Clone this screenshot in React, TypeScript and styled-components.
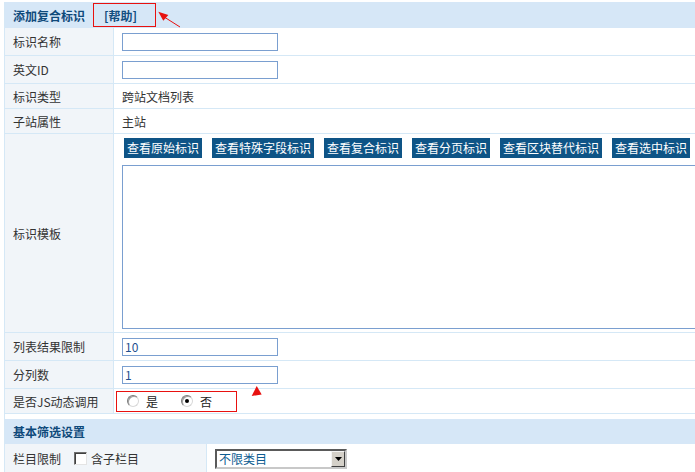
import React from 'react';
import styled, { createGlobalStyle } from 'styled-components';

const Global = createGlobalStyle`
  html, body { margin: 0; padding: 0; background: #fff; overflow: hidden; }
  body {
    font-family: "Noto Sans CJK SC", "Noto Sans", "Liberation Sans", sans-serif;
    font-size: 12px;
    color: #333;
  }
  * { box-sizing: border-box; }
`;

const Page = styled.div`
  position: relative;
  width: 695px;
  height: 472px;
  overflow: hidden;
  padding: 2px 0 0 4px;
`;

const Panel = styled.div`
  width: 700px;
  border-left: 1px solid #d5e8f6;
`;

const Header = styled.div<{ $h: number; $mt?: number }>`
  height: ${(p) => p.$h}px;
  margin-top: ${(p) => p.$mt ?? 0}px;
  background: #d6e7f7;
  display: flex;
  align-items: center;
  padding-left: 8px;
  font-weight: 700;
  color: #0f4a7b;
  white-space: nowrap;
`;

const HelpBox = styled.span`
  margin-left: 8px;
  width: 63px;
  height: 24px;
  border: 1px solid #e8110f;
  display: inline-flex;
  align-items: center;
  padding-left: 10px;
`;

const HelpLink = styled.a`
  color: #134f80;
  font-weight: 700;
  text-decoration: none;
`;

const Row = styled.div<{ $h: number; $label?: number }>`
  display: grid;
  grid-template-columns: ${(p) => p.$label ?? 109}px minmax(0, 1fr);
  height: ${(p) => p.$h}px;
  border-bottom: 1px solid #d5e8f6;
`;

const Label = styled.div`
  background: #f1f5f9;
  border-right: 1px solid #d5e8f6;
  padding-left: 8px;
  display: flex;
  align-items: center;
  color: #333;
  white-space: nowrap;
`;

const Value = styled.div<{ $pad?: number }>`
  padding-left: ${(p) => p.$pad ?? 8}px;
  display: flex;
  align-items: center;
  white-space: nowrap;
`;

const TemplateValue = styled.div`
  padding: 4px 0 0 8px;
  display: flex;
  flex-direction: column;
  align-items: flex-start;
  gap: 7px;
`;

const ButtonBar = styled.div`
  display: flex;
  gap: 10px;
  margin-left: 2px;
  white-space: nowrap;
`;

const Btn = styled.button`
  height: 20px;
  padding: 0 3px;
  margin: 0;
  background: #0e5486;
  color: #fff;
  border: 0;
  font: inherit;
  font-size: 12px;
  line-height: 20px;
  cursor: pointer;
`;

const TextArea = styled.textarea`
  width: 620px;
  height: 164px;
  flex: none;
  margin: 0;
  border: 1px solid #7a9fd0;
  resize: none;
  outline: none;
  font: inherit;
`;

const TextInput = styled.input`
  width: 156px;
  height: 18px;
  margin: 0;
  border: 1px solid #7a9fd0;
  padding: 0 2px;
  font: inherit;
  color: #1f4f8f;
  outline: none;
  background: #fff;
`;

const RadioBox = styled.div`
  width: 121px;
  height: 21px;
  border: 1px solid #e8110f;
  display: flex;
  align-items: center;
  padding-left: 10px;
`;

const RadioItem = styled.label<{ $gap?: number }>`
  display: inline-flex;
  align-items: center;
  gap: 7px;
  margin-left: ${(p) => p.$gap ?? 0}px;
  color: #222;
`;

const Radio = styled.span<{ $checked?: boolean }>`
  position: relative;
  width: 12px;
  height: 12px;
  border-radius: 50%;
  border: 1px solid;
  border-color: #7a7a7a #d8d8d8 #d8d8d8 #7a7a7a;
  box-shadow: inset 1px 1px 0 #a0a0a0;
  background: #fff;
  &::after {
    content: '';
    display: ${(p) => (p.$checked ? 'block' : 'none')};
    position: absolute;
    left: 3px;
    top: 3px;
    width: 4px;
    height: 4px;
    border-radius: 50%;
    background: #000;
  }
`;

const Check = styled.span`
  width: 13px;
  height: 13px;
  margin: 0 4px 0 13px;
  border: 1px solid;
  border-color: #6e6e6e #e4e4e4 #e4e4e4 #6e6e6e;
  box-shadow: inset 1px 1px 0 #404040;
  background: #fff;
`;

const SelectBox = styled.div`
  width: 132px;
  height: 20px;
  display: flex;
  align-items: stretch;
  border: 2px solid;
  border-color: #5a5a5a #c8c8c8 #c8c8c8 #5a5a5a;
  background: #fff;
`;

const SelectText = styled.span`
  flex: 1;
  padding-left: 2px;
  line-height: 16px;
  color: #0d5c91;
`;

const SelectArrow = styled.span`
  width: 14px;
  display: flex;
  align-items: center;
  justify-content: center;
  background: #d4d0c8;
  border: 1px solid;
  border-color: #f4f4f4 #404040 #404040 #f4f4f4;
`;

const Overlay = styled.svg<{ $x: number; $y: number }>`
  position: absolute;
  left: ${(p) => p.$x}px;
  top: ${(p) => p.$y}px;
  pointer-events: none;
  overflow: visible;
`;

const buttons = ['查看原始标识', '查看特殊字段标识', '查看复合标识', '查看分页标识', '查看区块替代标识', '查看选中标识'];

export default function App() {
  return (
    <>
      <Global />
      <Page>
        <Panel>
          <Header $h={26}>
            添加复合标识
            <HelpBox>
              <HelpLink href="#">[帮助]</HelpLink>
            </HelpBox>
          </Header>
          <Row $h={28}>
            <Label>标识名称</Label>
            <Value><TextInput /></Value>
          </Row>
          <Row $h={28}>
            <Label>英文ID</Label>
            <Value><TextInput /></Value>
          </Row>
          <Row $h={25}>
            <Label>标识类型</Label>
            <Value>跨站文档列表</Value>
          </Row>
          <Row $h={25}>
            <Label>子站属性</Label>
            <Value>主站</Value>
          </Row>
          <Row $h={199}>
            <Label>标识模板</Label>
            <TemplateValue>
              <ButtonBar>
                {buttons.map((b) => (
                  <Btn key={b} type="button">{b}</Btn>
                ))}
              </ButtonBar>
              <TextArea />
            </TemplateValue>
          </Row>
          <Row $h={28}>
            <Label>列表结果限制</Label>
            <Value><TextInput defaultValue="10" /></Value>
          </Row>
          <Row $h={28}>
            <Label>分列数</Label>
            <Value><TextInput defaultValue="1" /></Value>
          </Row>
          <Row $h={25}>
            <Label>是否JS动态调用</Label>
            <Value $pad={2}>
              <RadioBox>
                <RadioItem><Radio />是</RadioItem>
                <RadioItem $gap={23}><Radio $checked />否</RadioItem>
              </RadioBox>
            </Value>
          </Row>
          <Header $h={25} $mt={5}>基本筛选设置</Header>
          <Row $h={30} $label={202}>
            <Label>
              栏目限制<Check />含子栏目
            </Label>
            <Value>
              <SelectBox>
                <SelectText>不限类目</SelectText>
                <SelectArrow>
                  <svg width="7" height="4" viewBox="0 0 7 4"><path d="M0 0H7L3.5 4Z" fill="#000" /></svg>
                </SelectArrow>
              </SelectBox>
            </Value>
          </Row>
        </Panel>
        <Overlay $x={155} $y={8} width="30" height="22" viewBox="0 0 30 22">
          <path d="M3.3 3.7 L13.3 7 L8.3 12.7 Z" fill="#e8110f" />
          <path d="M10 9.5 L25 19" stroke="#e8110f" strokeWidth="1" />
        </Overlay>
        <Overlay $x={250} $y={384} width="14" height="14" viewBox="0 0 14 14">
          <path d="M6.7 2 L1.7 12 L11.7 10.5 Z" fill="#e8110f" />
        </Overlay>
      </Page>
    </>
  );
}
